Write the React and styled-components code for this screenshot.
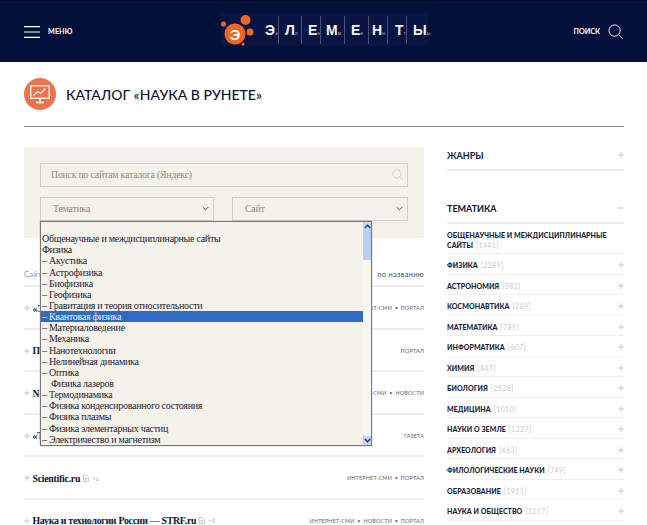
import React from "react";
import styled, { createGlobalStyle } from "styled-components";

const Global = createGlobalStyle`
  html, body { margin: 0; padding: 0; background: #fff; }
  body { font-family: "Lato", "Liberation Sans", sans-serif; color: #0b1437; }
  #root { height: 525px; overflow: hidden; }
`;
const Page = styled.div`width: 647px; height: 525px; overflow: hidden; position: relative;`;
const Header = styled.header`
  height: 62px; background: #03103a; border-top: 1px solid #000a26; box-sizing: border-box;
  display: flex; align-items: center; justify-content: space-between; padding: 0 24px; position: relative;
`;
const HeaderSide = styled.div`display: flex; align-items: center; gap: ${p => p.$gap}px; color: #fff; font-size: 7.2px; font-weight: 700; letter-spacing: ${p => p.$end ? "0" : ".1px"}; width: 60px; justify-content: ${p => p.$end ? "flex-end" : "flex-start"}; white-space: nowrap;`;
const Logo = styled.div`display: flex; align-items: center; height: 32px; width: 207px; background: #0a1442; margin-top: -3px; position: relative; left: 1px;`;
const LogoCell = styled.div`
  width: ${p => p.$w}px; height: 28px; box-sizing: border-box; display: flex; align-items: center; padding-left: ${p => p.$pad}px;
  border-right: ${p => p.$last ? "none" : "1px solid #4a5274"}; color: #f2f3f7; font-size: 14px; font-weight: 700; font-family: "Liberation Sans", sans-serif;
  small { font-size: 5px; font-weight: 400; color: #a8adc2; align-self: flex-end; margin-bottom: 8px; }
`;
const Main = styled.main`padding: 0 23px 0 24px;`;
const TitleRow = styled.div`height: 65px; box-sizing: border-box; border-bottom: 1px solid #81869c; display: flex; align-items: center; gap: 10px;`;
const TitleBadge = styled.div`width: 32px; height: 32px; border-radius: 50%; background: #f0704a; display: flex; align-items: center; justify-content: center;`;
const Title = styled.h1`margin: 0; font-size: 14px; font-weight: 500; font-family: "Lato", sans-serif; color: #0b1437; letter-spacing: 0;`;
const Columns = styled.div`display: grid; grid-template-columns: 400px 177px; column-gap: 23px; margin-top: 20px;`;
const Left = styled.div`position: relative;`;
const Panel = styled.div`height: 91px; box-sizing: border-box; background: #f5f2e9; padding: 15.5px 16px 0; display: flex; flex-direction: column; gap: 10px;`;
const Field = styled.div`
  height: 24px; box-sizing: border-box; border: 1.5px solid #d3d0c5; display: flex; align-items: center; justify-content: space-between;
  padding: 0 ${p => p.$pr}px 0 ${p => p.$pl}px; font: 9.8px "Liberation Serif", serif; letter-spacing: -.2px; color: #8f8a7c; flex: ${p => p.$flex || "none"};
`;
const FieldRow = styled.div`display: flex; gap: 18px;`;
const SortRow = styled.div`height: 49px; box-sizing: border-box; border-bottom: 2px solid #efefef; display: flex; justify-content: space-between; align-items: flex-end; padding-bottom: 6px; font-size: 7.5px; color: #8b8f9e; letter-spacing: .3px;`;
const SortRight = styled.span`color: #4a5068;`;
const Row = styled.div`height: 42.5px; box-sizing: border-box; border-bottom: 2px solid #efefef; display: flex; align-items: center; justify-content: space-between; padding-top: 2px;`;
const RowName = styled.div`display: flex; align-items: center; gap: 2.5px;`;
const Name = styled.b`font: 700 9.8px "Liberation Serif", serif; letter-spacing: -.25px; color: #0b1437; white-space: nowrap;`;
const Count = styled.span`font-size: 6px; color: #b5b7c0; margin-left: 1px;`;
const Tags = styled.div`font-size: 5.4px; color: #5d6276; letter-spacing: .2px; word-spacing: 1.2px; white-space: nowrap; text-transform: uppercase;`;
const Popup = styled.div`
  position: absolute; left: 16px; top: 74px; width: 332px; height: 225px; box-sizing: border-box;
  background: #f5f2e9; border: 1px solid #777; box-shadow: 0 0 1px #888; display: flex; overflow: hidden;
`;
const Options = styled.div`flex: 1; min-width: 0;`;
const Option = styled.div`
  height: 11.15px; padding-left: 1px; font: 10px/11.15px "Liberation Serif", serif; white-space: pre; letter-spacing: -.28px;
  color: ${p => p.$sel ? "#e9eefb" : "#1c2236"}; background: ${p => p.$sel ? "#316ac5" : "transparent"};
`;
const Scrollbar = styled.div`width: 8px; display: flex; flex-direction: column; background: #f8f6ef;`;
const ScrollButton = styled.div`height: 9px; background: #c3d3f5; display: flex; align-items: center; justify-content: center;`;
const ScrollThumb = styled.div`height: 29px; background: #b9cef7;`;
const ScrollTrack = styled.div`flex: 1;`;
const Side = styled.aside`display: flex; flex-direction: column;`;
const Head = styled.div`
  height: ${p => p.$h}px; box-sizing: border-box; border-bottom: 2px solid #efefef; display: flex; align-items: center; justify-content: space-between;
  margin-top: ${p => p.$mt || 0}px; font-size: 9px; font-weight: 700; color: #0b1437; padding-bottom: 6px;
`;
const Item = styled.div`
  min-height: 20.5px; box-sizing: border-box; border-bottom: 1.5px solid #efefef; display: flex; align-items: center; justify-content: space-between; padding: ${p => p.$multi ? "6px 0 3px" : "3px 0 0"};
  font-size: 7px; line-height: 10px; font-weight: 900; letter-spacing: .06px; color: #141b3d;
`;
const ItemCount = styled.span`font-weight: 400; color: #c8cad0; letter-spacing: .4px; margin-left: 3px;`;
const PlusSvg = styled.svg`flex: none; display: block;`;

const Plus = ({ minus }) => (
  <PlusSvg width="6" height="6" viewBox="0 0 6 6" fill="none" stroke="#c9cbd1" strokeWidth="1">
    <path d={minus ? "M0 3h6" : "M0 3h6M3 0v6"} />
  </PlusSvg>
);
const Hamburger = () => (
  <svg width="16" height="12" viewBox="0 0 16 12" fill="none" stroke="#fff" strokeWidth="1.2"><path d="M0 .6h16M0 6h16M0 11.4h16" /></svg>
);
const Lens = ({ size, color, w }) => (
  <svg width={size} height={size} viewBox="0 0 16 16" fill="none" stroke={color} strokeWidth={w}>
    <circle cx="7" cy="7" r="6" /><path d="M11.4 11.4 15.5 15.5" />
  </svg>
);
const Chevron = () => (
  <svg width="7" height="5" viewBox="0 0 7 5" fill="none" stroke="#555" strokeWidth="1"><path d="M.7 1 3.5 3.8 6.3 1" /></svg>
);
const LogoMark = () => (
  <svg width="41" height="32" viewBox="0 0 41 32" style={{ flex: "none" }}>
    <g fill="#f26522">
      <circle cx="14" cy="20" r="10.5" /><circle cx="24.5" cy="6" r="5" /><circle cx="29" cy="18" r="3.5" />
      <circle cx="2.5" cy="10" r="2.5" /><circle cx="22" cy="30" r="1.5" />
    </g>
    <text x="14" y="25.5" textAnchor="middle" fontSize="15" fontWeight="700" fontFamily="Liberation Sans" fill="#fff">Э</text>
  </svg>
);
const MonitorIcon = () => (
  <svg width="20" height="19" viewBox="0 0 20 19" fill="none" stroke="#fff">
    <rect x=".7" y=".7" width="18.6" height="12.6" strokeWidth="1.3" />
    <path d="M3.5 10.5 7.5 6.5 10.5 8.5 15.5 3.5" strokeWidth="1.3" />
    <path d="M10 13.5v3M6 17.5h8" strokeWidth="1.4" />
  </svg>
);
const FileIcon = () => (
  <svg width="6" height="7" viewBox="0 0 6 7" fill="none" stroke="#b5b7c0" strokeWidth=".7"><path d="M.5.5h3.2L5.5 2.3v4.2h-5zM1.5 3.5h3M1.5 5h3" /></svg>
);
const Arrow = ({ up }) => (
  <svg width="7" height="5" viewBox="0 0 7 5" fill="none" stroke="#2b3550" strokeWidth="1.3"><path d={up ? "M.8 4 3.5 1.2 6.2 4" : "M.8 1 3.5 3.8 6.2 1"} /></svg>
);

const logoCells = [["Э", "э", 17, 3], ["Л", "л", 23, 6], ["Е", "е", 19, 6], ["М", "м", 24, 5], ["Е", "е", 24, 6], ["Н", "н", 19, 3], ["Т", "т", 19, 7], ["Ы", "ы", 21, 6]];
const options = ["", "Общенаучные и междисциплинарные сайты", "Физика", "– Акустика", "– Астрофизика", "– Биофизика", "– Геофизика", "– Гравитация и теория относительности", "– Квантовая физика", "– Материаловедение", "– Механика", "– Нанотехнологии", "– Нелинейная динамика", "– Оптика", "    Физика лазеров", "– Термодинамика", "– Физика конденсированного состояния", "– Физика плазмы", "– Физика элементарных частиц", "– Электричество и магнетизм"];
const rows = [
  ["«Элементы»", "", "Интернет-СМИ • Портал"],
  ["Популярная механика", "", "Портал"],
  ["N+1", "", "Интернет-СМИ • Новости"],
  ["«Троицкий вариант»", "", "Газета"],
  ["Scientific.ru", "+6", "Интернет-СМИ • Портал"],
  ["Наука и технологии России — STRF.ru", "+9", "Интернет-СМИ • Новости • Портал"],
];
const topics = [["Физика", 2289], ["Астрономия", 582], ["Космонавтика", 289], ["Математика", 785], ["Информатика", 607], ["Химия", 847], ["Биология", 2526], ["Медицина", 1010], ["Науки о Земле", 1227], ["Археология", 463], ["Филологические науки", 749], ["Образование", 1911], ["Наука и общество", 1217]];

export default function App() {
  return (
    <Page>
      <Global />
      <Header>
        <HeaderSide $gap={8}><Hamburger />МЕНЮ</HeaderSide>
        <Logo>
          <LogoMark />
          {logoCells.map(([a, b, w, pad], i) => (
            <LogoCell key={i} $w={w} $pad={pad} $last={i === logoCells.length - 1}>{a}<small>{b}</small></LogoCell>
          ))}
        </Logo>
        <HeaderSide $gap={8} $end>ПОИСК<Lens size={15} color="#fff" w={1} /></HeaderSide>
      </Header>
      <Main>
        <TitleRow>
          <TitleBadge><MonitorIcon /></TitleBadge>
          <Title>КАТАЛОГ «НАУКА В РУНЕТЕ»</Title>
        </TitleRow>
        <Columns>
          <Left>
            <Panel>
              <Field $pl={10} $pr={4}>Поиск по сайтам каталога (Яндекс)<Lens size={11} color="#c9c7bd" w={1} /></Field>
              <FieldRow>
                <Field $pl={12} $pr={4} $flex="0 0 174px">Тематика<Chevron /></Field>
                <Field $pl={12} $pr={4} $flex="1">Сайт<Chevron /></Field>
              </FieldRow>
            </Panel>
            <SortRow><span>Сайт</span><SortRight>по названию</SortRight></SortRow>
            {rows.map(([n, c, t]) => (
              <Row key={n}>
                <RowName>
                  <Plus /><Name>{n}</Name>
                  {c && <><FileIcon /><Count>{c}</Count></>}
                </RowName>
                <Tags>{t}</Tags>
              </Row>
            ))}
            <Popup>
              <Options>
                {options.map((o, i) => <Option key={i} $sel={i === 8}>{o}</Option>)}
              </Options>
              <Scrollbar>
                <ScrollButton><Arrow up /></ScrollButton>
                <ScrollThumb />
                <ScrollTrack />
                <ScrollButton><Arrow /></ScrollButton>
              </Scrollbar>
            </Popup>
          </Left>
          <Side>
            <Head $h={24}>ЖАНРЫ<Plus /></Head>
            <Head $h={24} $mt={29}>ТЕМАТИКА<Plus minus /></Head>
            <Item $multi><span>ОБЩЕНАУЧНЫЕ И МЕЖДИСЦИПЛИНАРНЫЕ САЙТЫ<ItemCount>[1441]</ItemCount></span></Item>
            {topics.map(([n, c]) => (
              <Item key={n}><span>{n.toUpperCase()}<ItemCount>[{c}]</ItemCount></span><Plus /></Item>
            ))}
          </Side>
        </Columns>
      </Main>
    </Page>
  );
}
